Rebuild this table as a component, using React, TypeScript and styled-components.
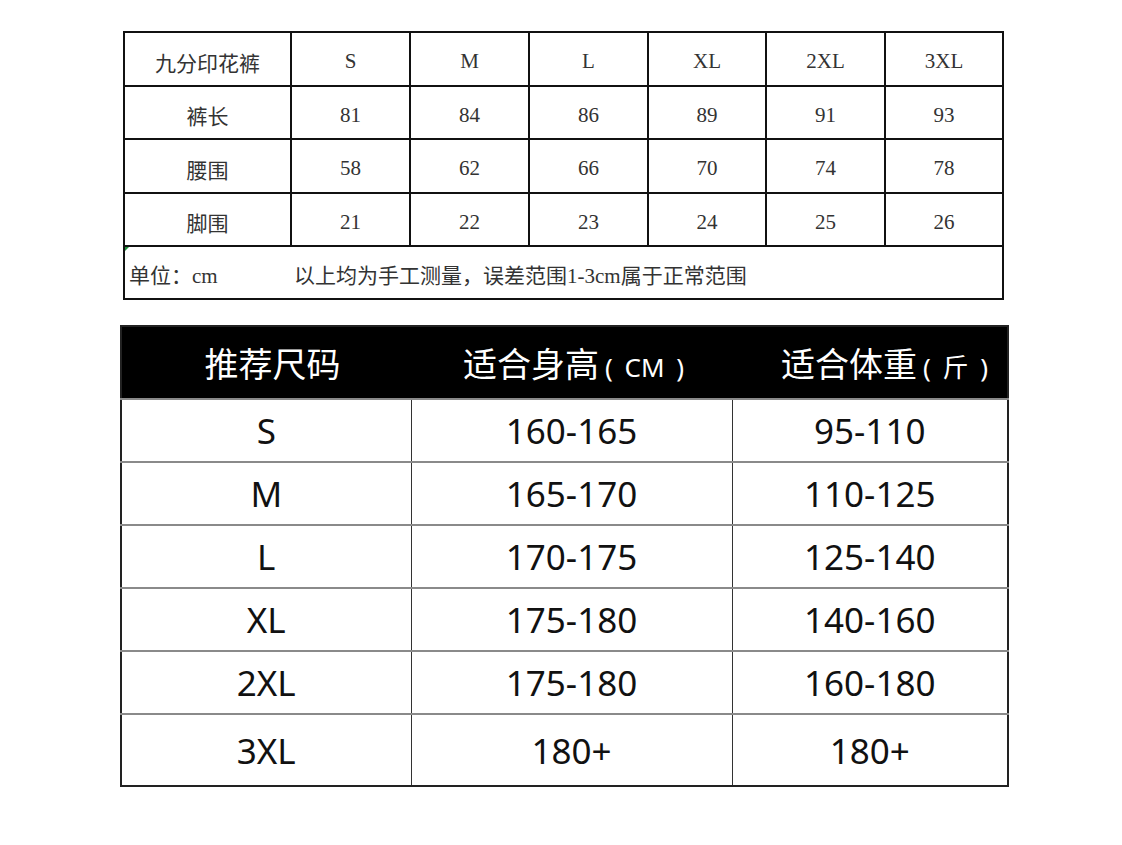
import React from 'react'
import styled, { createGlobalStyle } from 'styled-components'

const GlobalStyle = createGlobalStyle`
  html, body {
    margin: 0;
    padding: 0;
    background: #ffffff;
  }
`

const Page = styled.div`
  width: 1122px;
  height: 845px;
  padding-top: 31px;
  box-sizing: border-box;
  display: flex;
  flex-direction: column;
  row-gap: 25px;
`

const MeasureTable = styled.table`
  margin-left: 123px;
  width: 881px;
  border-collapse: collapse;
  table-layout: fixed;
  font-family: "Liberation Serif", "Noto Sans CJK SC", serif;
  font-size: 21px;
  color: #333;
`

const MeasureCell = styled.td`
  border: 2px solid #111;
  height: 45.5px;
  padding: 6px 0 0;
  text-align: center;
  vertical-align: middle;
`

const NoteCell = styled.td`
  position: relative;
  border: 2px solid #111;
  height: 49px;
  padding: 2px 0 0 4px;
  text-align: left;

  &::before {
    content: '';
    position: absolute;
    left: 0;
    top: 0;
    border-top: 4px solid #1f8f3a;
    border-right: 4px solid transparent;
  }
`

const Unit = styled.span`
  display: inline-block;
  width: 165px;
`

const SizeTable = styled.table`
  margin-left: 120px;
  width: 887px;
  border-collapse: collapse;
  table-layout: fixed;
  font-family: "Noto Sans", "Noto Sans CJK SC", sans-serif;
  color: #111;
  border: 2px solid #222;
`

const HeadCell = styled.th<{ $shift: number }>`
  background: #000;
  color: #fff;
  height: 71px;
  padding: 0 0 0 ${p => p.$shift}px;
  font-weight: 400;
  font-size: 34px;
  text-align: center;
  vertical-align: middle;
  white-space: nowrap;
`

const HeadUnit = styled.span`
  margin-left: 6px;
  font-size: 26px;
  word-spacing: 5px;
`

const SizeCell = styled.td<{ $tall?: boolean }>`
  height: ${p => (p.$tall ? 70 : 61)}px;
  padding: 0;
  border-top: 2px solid #8a8a8a;
  border-left: 1px solid #333;
  font-size: 35px;
  text-align: center;
  vertical-align: middle;
`

const measureCols = [167, 119, 119, 119, 118, 119, 118]

const measureRows = [
  ['九分印花裤', 'S', 'M', 'L', 'XL', '2XL', '3XL'],
  ['裤长', '81', '84', '86', '89', '91', '93'],
  ['腰围', '58', '62', '66', '70', '74', '78'],
  ['脚围', '21', '22', '23', '24', '25', '26'],
]

const sizeRows = [
  ['S', '160-165', '95-110'],
  ['M', '165-170', '110-125'],
  ['L', '170-175', '125-140'],
  ['XL', '175-180', '140-160'],
  ['2XL', '175-180', '160-180'],
  ['3XL', '180+', '180+'],
]

const App: React.FC = () => {
  return (
    <Page>
      <GlobalStyle />
      <MeasureTable>
        <colgroup>
          {measureCols.map((w, i) => <col key={i} style={{ width: w }} />)}
        </colgroup>
        <tbody>
          {measureRows.map((row, r) => (
            <tr key={r}>
              {row.map((cell, c) => <MeasureCell key={c}>{cell}</MeasureCell>)}
            </tr>
          ))}
          <tr>
            <NoteCell colSpan={7}>
              <Unit>单位：cm</Unit>以上均为手工测量，误差范围1-3cm属于正常范围
            </NoteCell>
          </tr>
        </tbody>
      </MeasureTable>

      <SizeTable>
        <colgroup>
          <col style={{ width: 290 }} />
          <col style={{ width: 321 }} />
          <col style={{ width: 276 }} />
        </colgroup>
        <thead>
          <tr>
            <HeadCell $shift={12}>推荐尺码</HeadCell>
            <HeadCell $shift={4}>适合身高<HeadUnit>( CM )</HeadUnit></HeadCell>
            <HeadCell $shift={30}>适合体重<HeadUnit>( 斤 )</HeadUnit></HeadCell>
          </tr>
        </thead>
        <tbody>
          {sizeRows.map((row, r) => (
            <tr key={r}>
              {row.map((cell, c) => (
                <SizeCell key={c} $tall={r === sizeRows.length - 1}>{cell}</SizeCell>
              ))}
            </tr>
          ))}
        </tbody>
      </SizeTable>
    </Page>
  )
}

export default App
